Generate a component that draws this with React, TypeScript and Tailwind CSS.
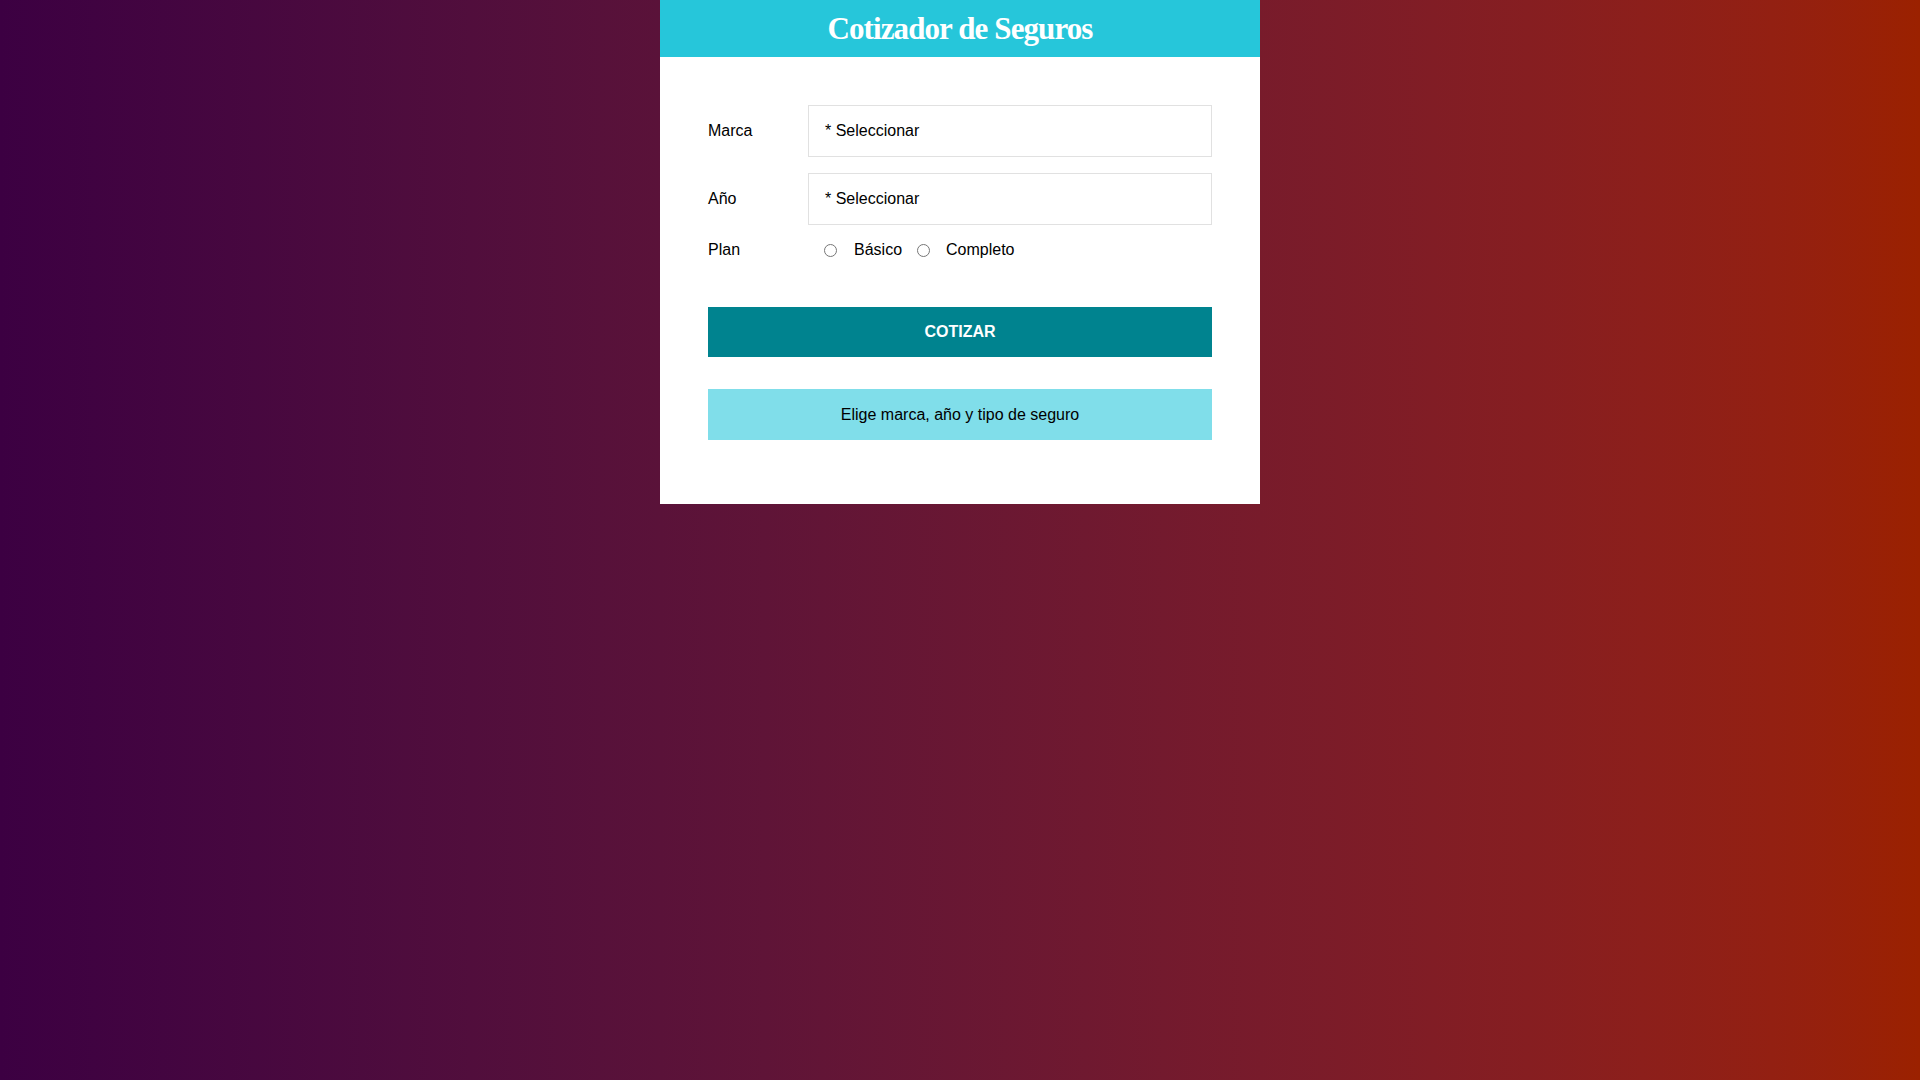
import React from "react";

const fields = [
  { label: "Marca", name: "marca" },
  { label: "Año", name: "year" },
];

export default function App() {
  return (
    <div className="min-h-screen w-full bg-gradient-to-r from-[#3c0042] to-[#9b2100] flex justify-center font-['Liberation_Sans',Arial,sans-serif] text-[16px] text-black">
      <div className="w-[600px] self-start bg-white">
        {/* Header */}
        <div className="h-[57px] bg-[#26c6da] flex items-center justify-center">
          <h1 className="text-white font-bold text-[31px] leading-none tracking-[-0.9px] font-['Liberation_Serif','Times_New_Roman',serif]">
            Cotizador de Seguros
          </h1>
        </div>

        <form className="px-12 pt-[48px] pb-[64px]">
          {fields.map(({ label, name }) => (
            <div key={name} className="flex items-center mb-4">
              <label className="w-[100px] shrink-0">{label}</label>
              <select
                name={name}
                className="w-[404px] h-[52px] pl-[16px] pr-2 border border-[#e1e1e1] bg-white appearance-none outline-none"
              >
                <option>* Seleccionar</option>
              </select>
            </div>
          ))}

          <div className="flex items-center h-[18px] mt-[2px]">
            <label className="w-[100px] shrink-0">Plan</label>
            <input type="radio" name="plan" value="basico" className="m-0 ml-[16px] w-[13px] h-[13px]" />
            <span className="ml-[17px]">Básico</span>
            <input type="radio" name="plan" value="completo" className="m-0 ml-[15px] w-[13px] h-[13px]" />
            <span className="ml-[16px]">Completo</span>
          </div>

          <button
            type="button"
            className="mt-[48px] w-full h-[50px] bg-[#00838f] text-white font-bold uppercase"
          >
            Cotizar
          </button>

          <div className="mt-8 h-[51px] bg-[#80deea] flex items-center justify-center">
            Elige marca, año y tipo de seguro
          </div>
        </form>
      </div>
    </div>
  );
}
